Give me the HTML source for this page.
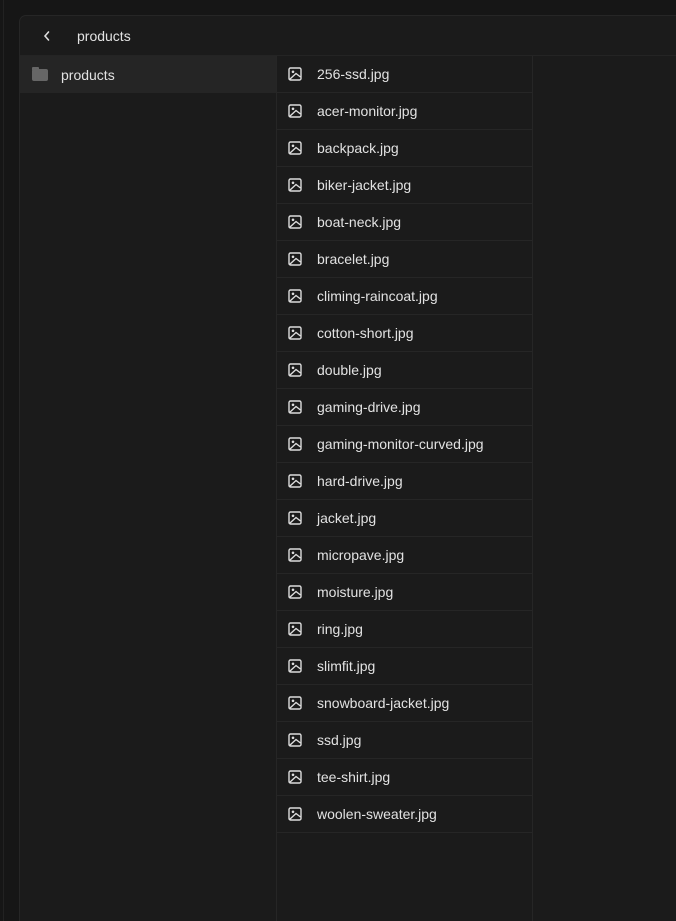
<!DOCTYPE html>
<html><head><style>
html,body{margin:0;width:676px;height:921px;overflow:hidden}
body{background:#161616;font-family:"Liberation Sans",sans-serif;color:#e2e2e2;font-size:14px;position:relative}
.vl{position:absolute;left:3px;top:0;width:1px;height:921px;background:#222}
.panel{position:absolute;left:19px;top:15px;width:670px;height:906px;background:#1b1b1b;border:1px solid #262626;border-bottom:none;border-radius:7px 0 0 0;box-sizing:border-box}
.hdr{height:40px;border-bottom:1px solid #242424;position:relative;box-sizing:border-box}
.hdr .t{position:absolute;left:57px;top:12px}
.hdr svg{position:absolute;left:22px;top:14px}
.left{position:absolute;left:0;top:40px;width:257px;bottom:0;border-right:1px solid #262626;box-sizing:border-box}
.sel{height:37px;background:#252525;position:relative}
.sel .t{position:absolute;left:41px;top:11px}
.fold{position:absolute;left:12px;top:13px;width:16px;height:12px;background:#666;border-radius:2px}
.fold:before{content:"";position:absolute;left:0;top:-2px;width:7px;height:3px;background:#666;border-radius:1px 1px 0 0}
.files{position:absolute;left:257px;top:40px;width:256px;bottom:0;border-right:1px solid #262626;box-sizing:border-box}
.row{height:37px;border-bottom:1px solid #262626;position:relative;box-sizing:border-box}
.row svg{position:absolute;left:11px;top:11px}
.row span{position:absolute;left:40px;top:10px}
</style></head><body>
<div class="vl"></div>
<div class="panel">
<div class="hdr"><svg width="10" height="12" viewBox="0 0 10 12"><path d="M6.5 2 L3 6 L6.5 10" stroke="#ddd" stroke-width="1.6" fill="none" stroke-linecap="round"/></svg><span class="t">products</span></div>
<div class="left"><div class="sel"><div class="fold"></div><span class="t">products</span></div></div>
<div class="files">
<script>
var f=["256-ssd.jpg","acer-monitor.jpg","backpack.jpg","biker-jacket.jpg","boat-neck.jpg","bracelet.jpg","climing-raincoat.jpg","cotton-short.jpg","double.jpg","gaming-drive.jpg","gaming-monitor-curved.jpg","hard-drive.jpg","jacket.jpg","micropave.jpg","moisture.jpg","ring.jpg","slimfit.jpg","snowboard-jacket.jpg","ssd.jpg","tee-shirt.jpg","woolen-sweater.jpg"];
f.forEach(function(n){document.write('<div class="row"><svg width="14" height="14" viewBox="0 0 14 14"><rect x="1" y="1" width="12" height="12" rx="1.5" stroke="#ddd" stroke-width="1.4" fill="none"/><circle cx="5" cy="4.8" r="1.3" fill="#ddd"/><path d="M1.5 12.5 L8 6.5 L12.5 10" stroke="#ddd" stroke-width="1.4" fill="none"/></svg><span>'+n+'</span></div>')});
</script>
</div>
</div>
</body></html>
